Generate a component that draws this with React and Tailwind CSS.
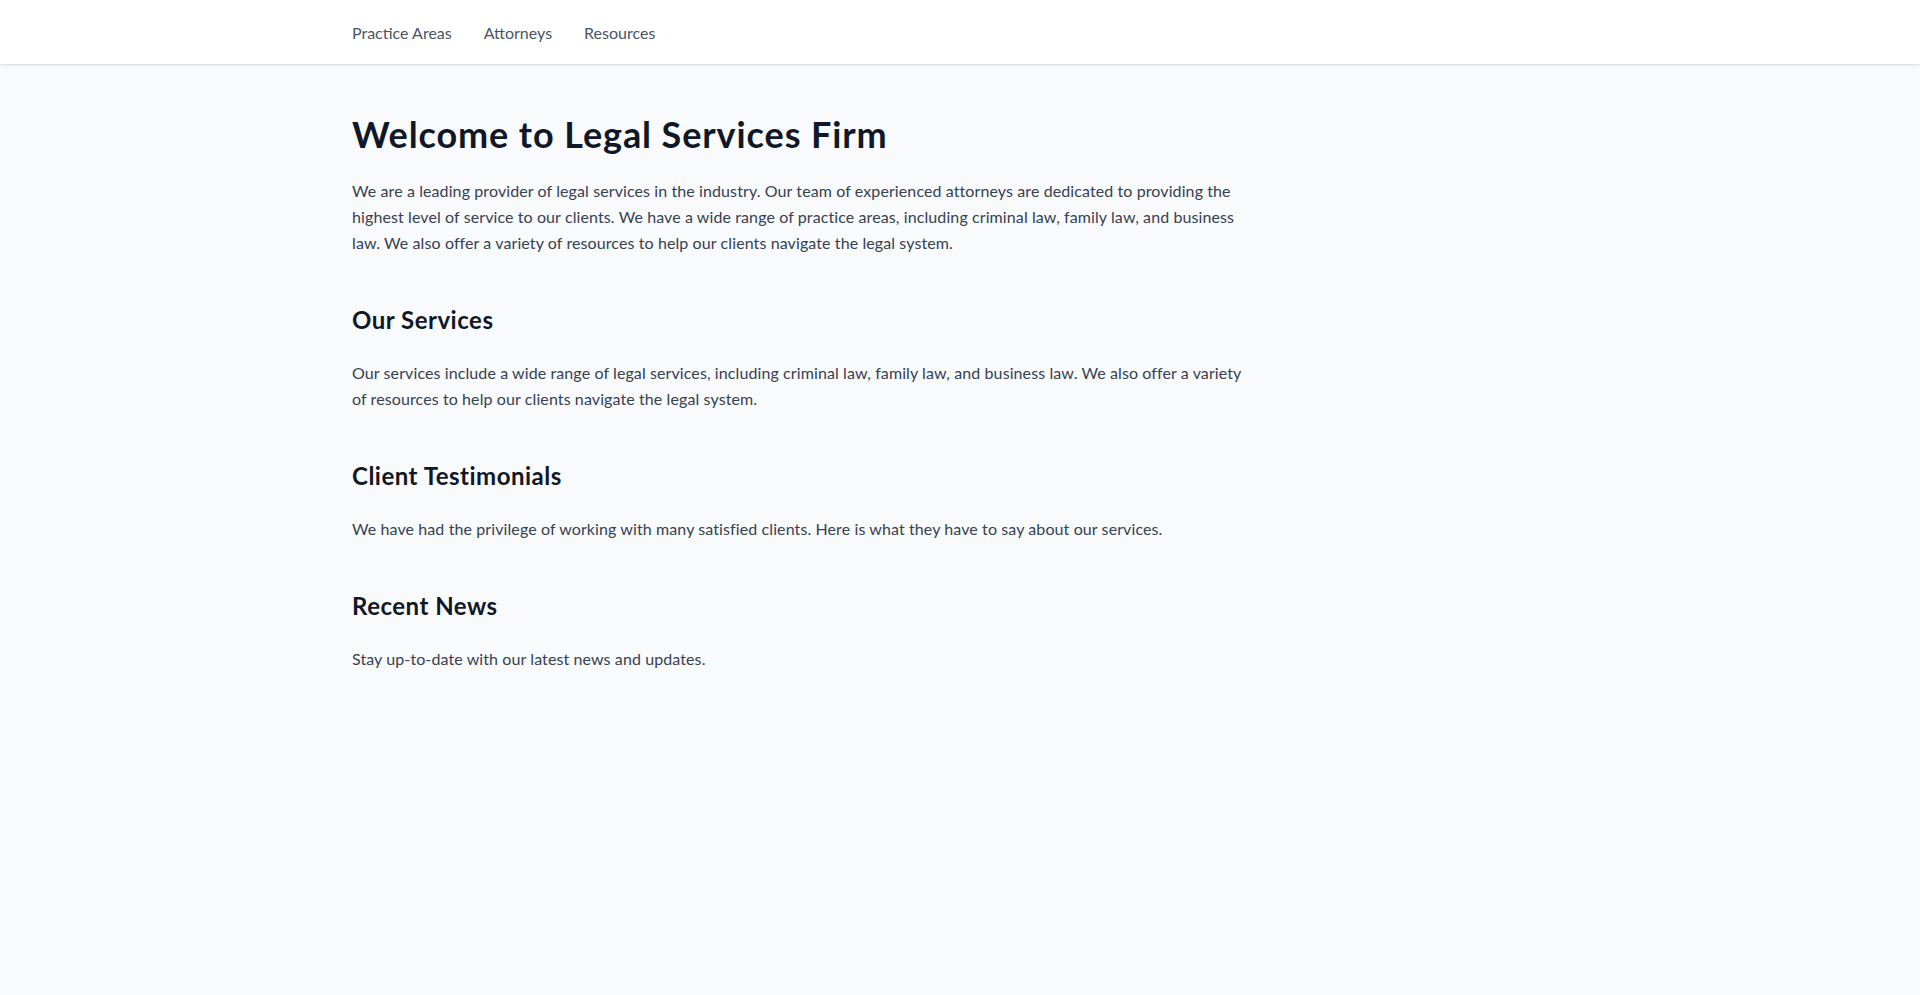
import React from 'react';

const sections = [
  {
    title: 'Our Services',
    body: 'Our services include a wide range of legal services, including criminal law, family law, and business law. We also offer a variety of resources to help our clients navigate the legal system.',
  },
  {
    title: 'Client Testimonials',
    body: 'We have had the privilege of working with many satisfied clients. Here is what they have to say about our services.',
  },
  {
    title: 'Recent News',
    body: 'Stay up-to-date with our latest news and updates.',
  },
];

const App = () => {
  return (
    <div className="min-h-screen bg-gray-50 font-['Lato','Noto_Sans',sans-serif]">
      <nav className="bg-white shadow-sm">
        <div className="max-w-7xl mx-auto px-8 h-16 pt-0.5 flex items-center gap-8">
          <a href="#" className="text-base text-gray-600">Practice Areas</a>
          <a href="#" className="text-base text-gray-600">Attorneys</a>
          <a href="#" className="text-base text-gray-600">Resources</a>
        </div>
      </nav>

      <main className="max-w-7xl mx-auto px-8 pt-[50px] pb-12">
        <div className="max-w-4xl">
          <h1 className="text-4xl font-bold tracking-wide text-gray-900 mb-6">Welcome to Legal Services Firm</h1>
          <p className="text-base leading-relaxed tracking-[0.1px] text-gray-700 mb-12">
            We are a leading provider of legal services in the industry. Our team of experienced attorneys are dedicated to providing the highest level of service to our clients. We have a wide range of practice areas, including criminal law, family law, and business law. We also offer a variety of resources to help our clients navigate the legal system.
          </p>

          {sections.map((s) => (
            <section key={s.title} className="mb-12">
              <h2 className="text-2xl font-bold tracking-[0.5px] text-gray-900 mb-6">{s.title}</h2>
              <p className="text-base leading-relaxed tracking-[0.1px] text-gray-700">{s.body}</p>
            </section>
          ))}
        </div>
      </main>
    </div>
  );
};

export default App;
